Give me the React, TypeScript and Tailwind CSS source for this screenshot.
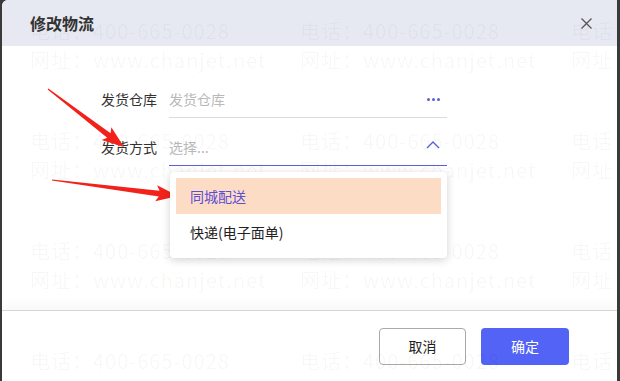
const font = { fontFamily: '"Noto Sans CJK SC", "Noto Sans", sans-serif' };

type Pt = [number, number];

// red annotation arrow, tail -> tip
const arrowPoints = (tail: Pt, tip: Pt) => {
  const dx = tip[0] - tail[0];
  const dy = tip[1] - tail[1];
  const len = Math.hypot(dx, dy);
  const ux = dx / len;
  const uy = dy / len;
  const nx = -uy;
  const ny = ux;
  const head = 22;
  const bx = tip[0] - ux * head;
  const by = tip[1] - uy * head;
  const p = (x: number, y: number, w: number) => `${x + nx * w},${y + ny * w}`;
  return [
    p(tail[0], tail[1], 0.6),
    p(bx + ux * 3, by + uy * 3, 2.8),
    p(bx, by, 8),
    `${tip[0]},${tip[1]}`,
    p(bx, by, -8),
    p(bx + ux * 3, by + uy * 3, -2.8),
    p(tail[0], tail[1], -0.6),
  ].join(" ");
};

const Watermark = () => {
  const cols = [28, 298, 569];
  const rows = [16, 126, 236, 346];
  return (
    <div className="pointer-events-none absolute inset-0 overflow-hidden">
      {rows.map((top) =>
        cols.map((left) => (
          <div
            key={`${top}-${left}`}
            className="absolute text-[20px] leading-[29px] tracking-[1px] whitespace-nowrap text-[rgba(0,0,0,0.04)]"
            style={{ top, left }}
          >
            <div>电话：400-665-0028</div>
            <div>网址：www.chanjet.net</div>
          </div>
        ))
      )}
    </div>
  );
};

export default function App() {
  return (
    <div
      className="relative w-[620px] h-[381px] overflow-hidden bg-[#3a3a3a] pl-[2px] pr-[3px]"
      style={font}
    >
      <div className="relative flex h-full flex-col bg-white rounded-tl-[6px]">
        {/* header */}
        <div className="flex h-[46px] items-center justify-between bg-[#e6e9f2] pl-[28px] pr-[25px] rounded-tl-[6px]">
          <span className="text-[16px] font-bold text-[#333]">修改物流</span>
          <svg width="11" height="11" viewBox="0 0 11 11" className="text-[#555]">
            <path d="M.5.5l10 10M10.5.5l-10 10" stroke="currentColor" strokeWidth="1.3" fill="none" />
          </svg>
        </div>

        {/* form */}
        <div className="flex-1 pl-[97px] pt-[36px]">
          <div className="flex flex-col gap-[12px]">
            <div className="flex items-end gap-[12px]">
              <label className="w-[58px] pb-[8px] text-right text-[14px] text-[#333]">发货仓库</label>
              <div className="flex h-[36px] w-[278px] items-center justify-between border-b border-[#dcdcdc] pr-[7px]">
                <span className="text-[14px] text-[#b9b9b9]">发货仓库</span>
                <span className="flex gap-[2px]">
                  <i className="h-[3px] w-[3px] rounded-full bg-[#5b5fd6]" />
                  <i className="h-[3px] w-[3px] rounded-full bg-[#5b5fd6]" />
                  <i className="h-[3px] w-[3px] rounded-full bg-[#5b5fd6]" />
                </span>
              </div>
            </div>

            <div className="flex items-end gap-[12px]">
              <label className="w-[58px] pb-[8px] text-right text-[14px] text-[#333]">发货方式</label>
              <div className="relative w-[278px]">
                <div className="flex h-[36px] items-center justify-between border-b border-[#5b5fd6] pr-[7px]">
                  <span className="text-[14px] text-[#b9b9b9]">选择...</span>
                  <svg width="14" height="8" viewBox="0 0 14 8" className="mb-[6px] text-[#5b5fd6]">
                    <path d="M1 7 7 1l6 6" stroke="currentColor" strokeWidth="1.4" fill="none" />
                  </svg>
                </div>

                {/* dropdown */}
                <div className="absolute left-[1px] top-[42px] z-10 w-[277px] rounded-[4px] bg-white p-[6px] pb-[8px] shadow-[0_2px_8px_rgba(0,0,0,0.18)]">
                  <div className="flex h-[36px] items-center bg-[#fddcc6] pl-[14px] text-[14px] text-[#5b4fd6]">
                    同城配送
                  </div>
                  <div className="flex h-[36px] items-center pl-[14px] text-[14px] text-[#222]">
                    快递(电子面单)
                  </div>
                </div>
              </div>
            </div>
          </div>
        </div>

        {/* footer */}
        <div className="flex h-[71px] items-center justify-end gap-[15px] border-t border-[#d6d6d6] pr-[48px] shadow-[0_-6px_10px_rgba(0,0,0,0.03)]">
          <button className="h-[37px] w-[87px] rounded-[4px] border border-[#a9a9a9] bg-white text-[14px] text-[#222]">
            取消
          </button>
          <button className="h-[37px] w-[88px] rounded-[4px] bg-[#5263f5] text-[14px] text-white">
            确定
          </button>
        </div>

        <Watermark />
      </div>

      <svg className="pointer-events-none absolute inset-0" width="620" height="381">
        <polygon points={arrowPoints([48, 89], [124, 147])} fill="#f2221b" />
        <polygon points={arrowPoints([52, 180], [178, 196])} fill="#f2221b" />
      </svg>
    </div>
  );
}
